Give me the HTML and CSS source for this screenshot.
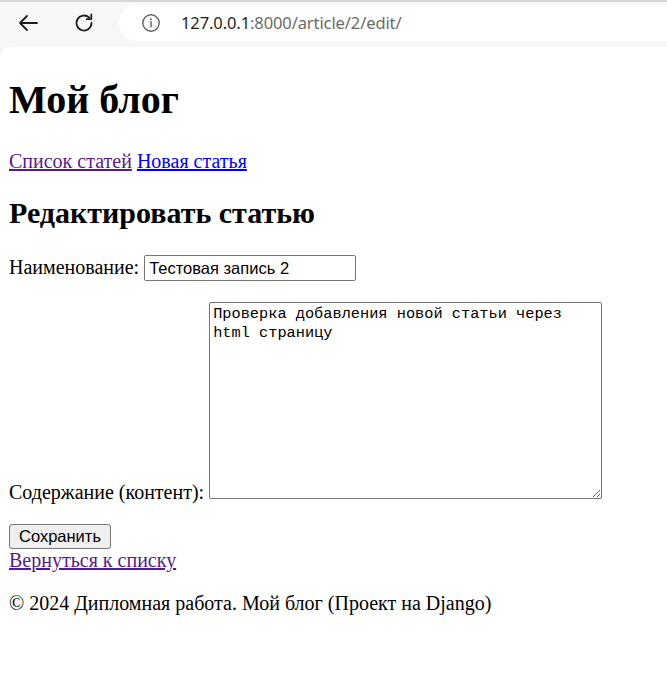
FILE: index.html
```html
<!DOCTYPE html>
<html lang="ru">
<head>
<meta charset="utf-8">
<title>Мой блог</title>
<link rel="stylesheet" href="styles.css">
</head>
<body>
<div class="chrome">
  <div class="toolbar">
    <span class="nav-btn">
      <svg width="24" height="24" viewBox="0 0 24 24"><path d="M21 12H4M11 5l-7 7 7 7" fill="none" stroke="#1f1f1f" stroke-width="1.8" stroke-linecap="round" stroke-linejoin="round"/></svg>
    </span>
    <span class="nav-btn">
      <svg width="24" height="24" viewBox="0 0 24 24"><path d="M19.5 12a7.5 7.5 0 1 1-2.2-5.3" fill="none" stroke="#1f1f1f" stroke-width="1.8" stroke-linecap="round"/><path d="M19.3 3.5v4.6h-4.6" fill="none" stroke="#1f1f1f" stroke-width="1.8" stroke-linecap="round" stroke-linejoin="round"/></svg>
    </span>
    <div class="omnibox">
      <svg class="info" width="20" height="20" viewBox="0 0 20 20"><circle cx="10" cy="10" r="8.2" fill="none" stroke="#5f6368" stroke-width="1.4"/><path d="M10 8.8v5" stroke="#5f6368" stroke-width="1.5" stroke-linecap="round"/><circle cx="10" cy="6.2" r="0.95" fill="#5f6368"/></svg>
      <span class="url"><span class="host">127.0.0.1</span><span class="rest">:8000/article/2/edit/</span></span>
    </div>
  </div>
</div>
<div class="page">
  <h1>Мой блог</h1>
  <p><a href="#" class="visited">Список статей</a> <a href="#" class="fresh">Новая статья</a></p>
  <h2>Редактировать статью</h2>
  <form class="form">
    <p><label>Наименование:</label> <input class="text-input" type="text" value="Тестовая запись 2"></p>
    <p class="area-row"><label>Содержание (контент):</label> <textarea class="area">Проверка добавления новой статьи через html страницу</textarea></p>
    <button class="btn" type="button">Сохранить</button>
  </form>
  <a href="#" class="visited">Вернуться к списку</a>
  <p>© 2024 Дипломная работа. Мой блог (Проект на Django)</p>
</div>
</body>
</html>
```
FILE: styles.css
```css
html, body {
  margin: 0;
  padding: 0;
}
body {
  background: #f3f3f3;
  font-family: "Liberation Serif", "Times New Roman", serif;
  font-size: 20px;
  color: #000;
}
.chrome {
  height: 47px;
  border-top: 2px solid #d6d6d6;
  box-sizing: border-box;
  background: #f7f7f7;
}
.toolbar {
  display: flex;
  align-items: center;
  height: 41px;
  padding-left: 16px;
}
.nav-btn {
  width: 24px;
  height: 24px;
  display: flex;
  margin-right: 32px;
}
.omnibox {
  flex: 1;
  height: 37px;
  margin-left: -9px;
  background: #fff;
  border-radius: 19px 0 0 19px;
  display: flex;
  align-items: center;
  padding-left: 22px;
}
.info {
  margin-right: 20px;
}
.url {
  font-family: "Noto Sans", "Open Sans", sans-serif;
  font-size: 16.5px;
  letter-spacing: -0.1px;
}
.host { color: #1f1f1f; }
.rest { color: #6b6b6b; }
.page {
  background: #fff;
  border-top-left-radius: 10px;
  padding: 1px 9px 40px;
  min-height: 600px;
}
h1 {
  font-size: 40px;
  margin: 28px 0 27px;
}
h2 {
  font-size: 30px;
  margin: 23px 0 25px;
}
p {
  margin: 20px 0;
}
.area-row {
  margin-top: 21px;
}
a.visited { color: #551a8b; }
a.fresh { color: #0000ee; }
.form {
  margin: 0;
}
.text-input {
  font-family: "Liberation Sans", Arial, sans-serif;
  font-size: 16.5px;
  width: 212px;
  height: 26px;
  box-sizing: border-box;
  padding: 1px 4px;
  border: 1px solid #767676;
  border-radius: 2px;
  color: #000;
}
.area {
  font-family: "Liberation Mono", "Courier New", monospace;
  font-size: 15.3px;
  line-height: 19px;
  width: 393px;
  height: 197px;
  box-sizing: border-box;
  padding: 2px 3px;
  border: 1px solid #767676;
  border-radius: 2px;
  color: #000;
  vertical-align: baseline;
}
.btn {
  font-family: "Liberation Sans", Arial, sans-serif;
  font-size: 16.5px;
  height: 25px;
  padding: 0 9px;
  background: #efefef;
  border: 1px solid #767676;
  border-radius: 3px;
  color: #000;
  display: block;
}
```
